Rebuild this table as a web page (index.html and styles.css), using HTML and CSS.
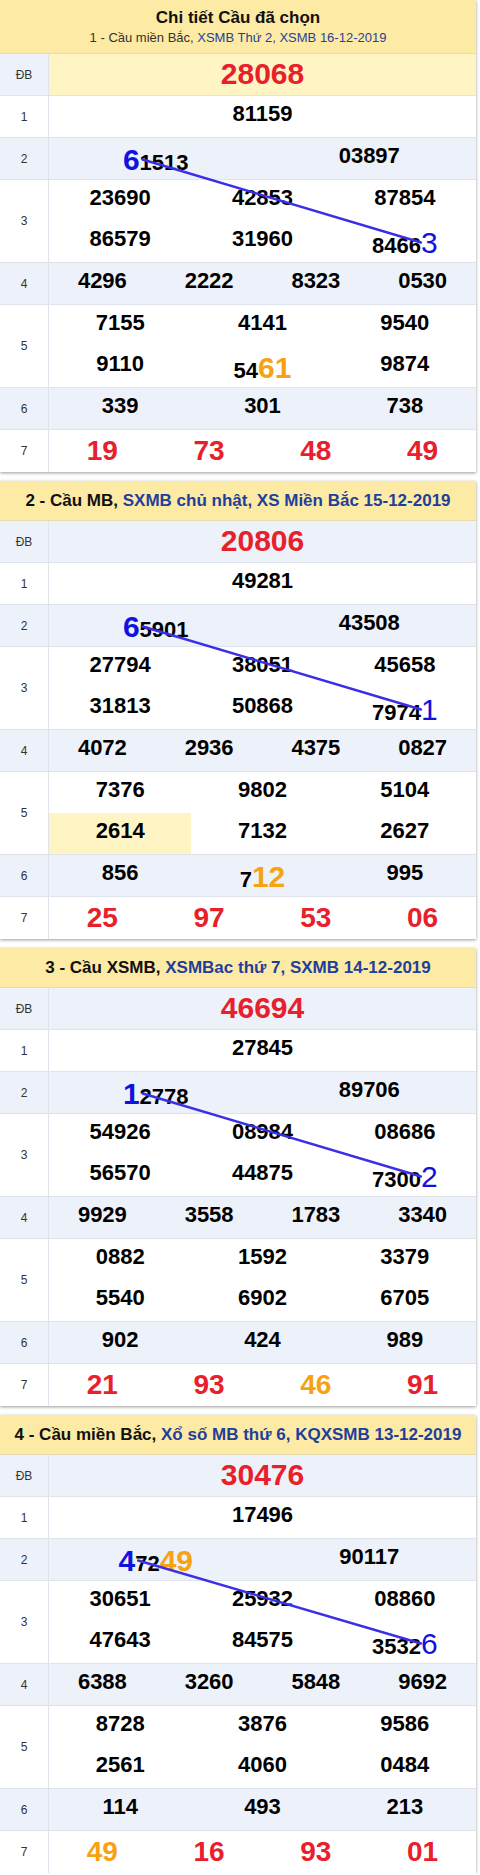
FILE: index.html
```html
<!DOCTYPE html>
<html lang="vi">
<head>
<meta charset="utf-8">
<title>Chi tiết Cầu đã chọn</title>
<link rel="stylesheet" href="styles.css">
</head>
<body>
<main class="page">

<section class="cau">
  <header class="cau-head cau-head--main">
    <h1 class="cau-title">Chi tiết Cầu đã chọn</h1>
    <p class="cau-sub">1 - Cầu miền Bắc, <a class="lnk">XSMB Thứ 2, XSMB 16-12-2019</a></p>
  </header>
  <div class="row row--alt">
    <div class="lbl">ĐB</div>
    <div class="data data--mid data--gold"><span class="db">28068</span></div>
  </div>
  <div class="row">
    <div class="lbl">1</div>
    <div class="data cols-1"><div class="c">81159</div></div>
  </div>
  <div class="row row--alt">
    <div class="lbl">2</div>
    <div class="data cols-2"><div class="c"><span class="hl hl-start">6</span>1513</div><div class="c">03897</div></div>
  </div>
  <div class="row">
    <div class="lbl">3</div>
    <div class="data cols-3"><div class="c">23690</div><div class="c">42853</div><div class="c">87854</div><div class="c">86579</div><div class="c">31960</div><div class="c">8466<span class="hl hl-end">3</span></div></div>
  </div>
  <div class="row row--alt">
    <div class="lbl">4</div>
    <div class="data cols-4"><div class="c">4296</div><div class="c">2222</div><div class="c">8323</div><div class="c">0530</div></div>
  </div>
  <div class="row">
    <div class="lbl">5</div>
    <div class="data cols-3"><div class="c">7155</div><div class="c">4141</div><div class="c">9540</div><div class="c">9110</div><div class="c">54<span class="or">61</span></div><div class="c">9874</div></div>
  </div>
  <div class="row row--alt">
    <div class="lbl">6</div>
    <div class="data cols-3"><div class="c">339</div><div class="c">301</div><div class="c">738</div></div>
  </div>
  <div class="row">
    <div class="lbl">7</div>
    <div class="data data--mid cols-4"><span class="g7">19</span><span class="g7">73</span><span class="g7">48</span><span class="g7">49</span></div>
  </div>
  <svg class="cau-line"><line></line></svg>
</section>

<section class="cau">
  <header class="cau-head">
    <h2 class="cau-h2">2 - Cầu MB, <a class="lnk">SXMB chủ nhật, XS Miền Bắc 15-12-2019</a></h2>
  </header>
  <div class="row row--alt">
    <div class="lbl">ĐB</div>
    <div class="data data--mid"><span class="db">20806</span></div>
  </div>
  <div class="row">
    <div class="lbl">1</div>
    <div class="data cols-1"><div class="c">49281</div></div>
  </div>
  <div class="row row--alt">
    <div class="lbl">2</div>
    <div class="data cols-2"><div class="c"><span class="hl hl-start">6</span>5901</div><div class="c">43508</div></div>
  </div>
  <div class="row">
    <div class="lbl">3</div>
    <div class="data cols-3"><div class="c">27794</div><div class="c">38051</div><div class="c">45658</div><div class="c">31813</div><div class="c">50868</div><div class="c">7974<span class="hl hl-end">1</span></div></div>
  </div>
  <div class="row row--alt">
    <div class="lbl">4</div>
    <div class="data cols-4"><div class="c">4072</div><div class="c">2936</div><div class="c">4375</div><div class="c">0827</div></div>
  </div>
  <div class="row">
    <div class="lbl">5</div>
    <div class="data cols-3"><div class="c">7376</div><div class="c">9802</div><div class="c">5104</div><div class="c c--gold">2614</div><div class="c">7132</div><div class="c">2627</div></div>
  </div>
  <div class="row row--alt">
    <div class="lbl">6</div>
    <div class="data cols-3"><div class="c">856</div><div class="c">7<span class="or">12</span></div><div class="c">995</div></div>
  </div>
  <div class="row">
    <div class="lbl">7</div>
    <div class="data data--mid cols-4"><span class="g7">25</span><span class="g7">97</span><span class="g7">53</span><span class="g7">06</span></div>
  </div>
  <svg class="cau-line"><line></line></svg>
</section>

<section class="cau">
  <header class="cau-head">
    <h2 class="cau-h2">3 - Cầu XSMB, <a class="lnk">XSMBac thứ 7, SXMB 14-12-2019</a></h2>
  </header>
  <div class="row row--alt">
    <div class="lbl">ĐB</div>
    <div class="data data--mid"><span class="db">46694</span></div>
  </div>
  <div class="row">
    <div class="lbl">1</div>
    <div class="data cols-1"><div class="c">27845</div></div>
  </div>
  <div class="row row--alt">
    <div class="lbl">2</div>
    <div class="data cols-2"><div class="c"><span class="hl hl-start">1</span>2778</div><div class="c">89706</div></div>
  </div>
  <div class="row">
    <div class="lbl">3</div>
    <div class="data cols-3"><div class="c">54926</div><div class="c">08984</div><div class="c">08686</div><div class="c">56570</div><div class="c">44875</div><div class="c">7300<span class="hl hl-end">2</span></div></div>
  </div>
  <div class="row row--alt">
    <div class="lbl">4</div>
    <div class="data cols-4"><div class="c">9929</div><div class="c">3558</div><div class="c">1783</div><div class="c">3340</div></div>
  </div>
  <div class="row">
    <div class="lbl">5</div>
    <div class="data cols-3"><div class="c">0882</div><div class="c">1592</div><div class="c">3379</div><div class="c">5540</div><div class="c">6902</div><div class="c">6705</div></div>
  </div>
  <div class="row row--alt">
    <div class="lbl">6</div>
    <div class="data cols-3"><div class="c">902</div><div class="c">424</div><div class="c">989</div></div>
  </div>
  <div class="row">
    <div class="lbl">7</div>
    <div class="data data--mid cols-4"><span class="g7">21</span><span class="g7">93</span><span class="g7 g7--or">46</span><span class="g7">91</span></div>
  </div>
  <svg class="cau-line"><line></line></svg>
</section>

<section class="cau">
  <header class="cau-head">
    <h2 class="cau-h2">4 - Cầu miền Bắc, <a class="lnk">Xổ số MB thứ 6, KQXSMB 13-12-2019</a></h2>
  </header>
  <div class="row row--alt">
    <div class="lbl">ĐB</div>
    <div class="data data--mid"><span class="db">30476</span></div>
  </div>
  <div class="row">
    <div class="lbl">1</div>
    <div class="data cols-1"><div class="c">17496</div></div>
  </div>
  <div class="row row--alt">
    <div class="lbl">2</div>
    <div class="data cols-2"><div class="c"><span class="hl hl-start">4</span>72<span class="or">49</span></div><div class="c">90117</div></div>
  </div>
  <div class="row">
    <div class="lbl">3</div>
    <div class="data cols-3"><div class="c">30651</div><div class="c">25932</div><div class="c">08860</div><div class="c">47643</div><div class="c">84575</div><div class="c">3532<span class="hl hl-end">6</span></div></div>
  </div>
  <div class="row row--alt">
    <div class="lbl">4</div>
    <div class="data cols-4"><div class="c">6388</div><div class="c">3260</div><div class="c">5848</div><div class="c">9692</div></div>
  </div>
  <div class="row">
    <div class="lbl">5</div>
    <div class="data cols-3"><div class="c">8728</div><div class="c">3876</div><div class="c">9586</div><div class="c">2561</div><div class="c">4060</div><div class="c">0484</div></div>
  </div>
  <div class="row row--alt">
    <div class="lbl">6</div>
    <div class="data cols-3"><div class="c">114</div><div class="c">493</div><div class="c">213</div></div>
  </div>
  <div class="row">
    <div class="lbl">7</div>
    <div class="data data--mid cols-4"><span class="g7 g7--or">49</span><span class="g7">16</span><span class="g7">93</span><span class="g7">01</span></div>
  </div>
  <svg class="cau-line"><line></line></svg>
</section>

</main>
<script src="script.js"></script>
</body>
</html>
```

FILE: styles.css
```css
* { box-sizing: border-box; }

body {
  margin: 0;
  background: #fff;
  font-family: "Liberation Sans", Arial, sans-serif;
  color: #000;
}

.page {
  width: 476px;
  display: flex;
  flex-direction: column;
  gap: 9px;
}

.cau {
  position: relative;
  background: #fff;
  box-shadow: 0 1px 3px rgba(0, 0, 0, 0.4);
}

.cau-head {
  height: 40px;
  background: #fdeaa4;
  border-bottom: 1px solid #e6dcb0;
  display: flex;
  align-items: center;
  justify-content: center;
  text-align: center;
}

.cau-head--main {
  height: 54px;
  flex-direction: column;
  justify-content: flex-start;
  padding-top: 7px;
}

.cau-title {
  margin: 0;
  font-size: 17px;
  line-height: 22px;
  font-weight: bold;
  color: #111;
}

.cau-sub {
  margin: 0;
  font-size: 13px;
  line-height: 17px;
  color: #333;
}

.cau-h2 {
  margin: 0;
  font-size: 17px;
  font-weight: bold;
  color: #111;
  white-space: nowrap;
}

.lnk {
  color: #1f3f9c;
  text-decoration: none;
}

.row {
  display: flex;
  height: 42px;
  border-bottom: 1px solid #dfe4ec;
}

.row:has(.cols-3 > .c:nth-child(4)) {
  height: 83px;
}

.row:last-of-type {
  border-bottom: 0;
}

.row--alt {
  background: #edf1f9;
}

.lbl {
  width: 49px;
  flex: none;
  border-right: 1px solid #dfe4ec;
  display: flex;
  align-items: center;
  justify-content: center;
  font-size: 12px;
  color: #333;
}

.data {
  flex: 1;
  display: grid;
  grid-auto-rows: 41px;
}

.data--mid {
  display: flex;
  align-items: center;
  justify-content: center;
}

.data--gold {
  background: #fff4c4;
}

.cols-1 { grid-template-columns: 1fr; }
.cols-2 { grid-template-columns: repeat(2, 1fr); }
.cols-3 { grid-template-columns: repeat(3, 1fr); }
.cols-4 { grid-template-columns: repeat(4, 1fr); }

.data--mid.cols-4 > .g7 {
  flex: 1;
  text-align: center;
}

.c {
  padding-top: 5px;
  font-size: 22px;
  line-height: 26px;
  font-weight: bold;
  text-align: center;
  white-space: nowrap;
  overflow: visible;
}

.c--gold {
  background: #fff4c4;
}

.db {
  font-size: 30px;
  font-weight: bold;
  color: #e8202b;
  padding-bottom: 1px;
}

.g7 {
  font-size: 28px;
  font-weight: bold;
  color: #e8202b;
}

.g7--or {
  color: #f7a213;
}

.hl {
  font-size: 30px;
  line-height: normal;
  color: #1212e0;
}

.hl-end {
  font-weight: normal;
}

.or {
  font-size: 30px;
  line-height: normal;
  color: #f7a213;
}

.cau-line {
  position: absolute;
  left: 0;
  top: 0;
  width: 100%;
  height: 100%;
  pointer-events: none;
  overflow: visible;
}

.cau-line line {
  stroke: #3a2fe6;
  stroke-width: 2.4;
  stroke-linecap: round;
}
```

FILE: script.js
```js
document.querySelectorAll('.cau').forEach(function (sec) {
  var a = sec.querySelector('.hl-start');
  var b = sec.querySelector('.hl-end');
  var line = sec.querySelector('.cau-line line');
  if (!a || !b || !line) return;
  var s = sec.getBoundingClientRect();
  var ra = a.getBoundingClientRect();
  var rb = b.getBoundingClientRect();
  line.setAttribute('x1', ra.right - s.left + 3);
  line.setAttribute('y1', ra.top + ra.height / 2 - s.top);
  line.setAttribute('x2', rb.left - s.left);
  line.setAttribute('y2', rb.top + rb.height / 2 - s.top);
});
```
